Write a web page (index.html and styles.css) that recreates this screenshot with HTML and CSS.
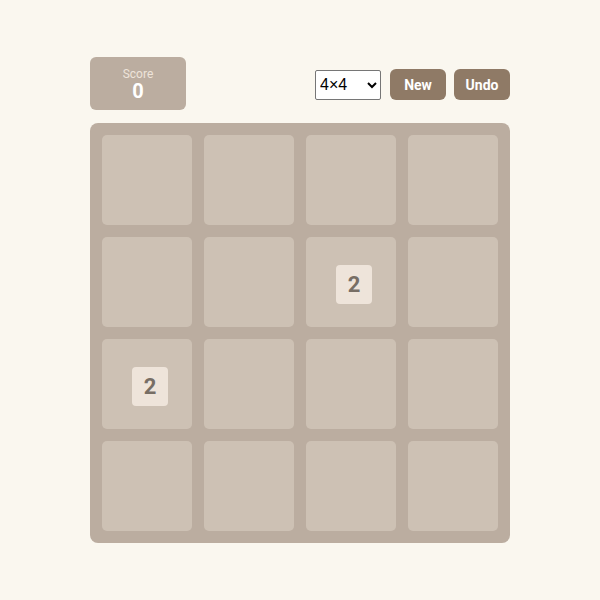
FILE: index.html
```html
<!DOCTYPE html>
<html>
<head>
<meta charset="utf-8">
<link rel="stylesheet" href="styles.css">
</head>
<body>
<div class="game">
  <div class="header">
    <div class="score">
      <div class="score-label">Score</div>
      <div class="score-value">0</div>
    </div>
    <div class="controls">
      <select class="size"><option>4×4</option></select>
      <button class="btn">New</button>
      <button class="btn">Undo</button>
    </div>
  </div>
  <div class="board">
    <div class="cell"></div><div class="cell"></div><div class="cell"></div><div class="cell"></div>
    <div class="cell"></div><div class="cell"></div><div class="cell"><div class="tile">2</div></div><div class="cell"></div>
    <div class="cell"><div class="tile">2</div></div><div class="cell"></div><div class="cell"></div><div class="cell"></div>
    <div class="cell"></div><div class="cell"></div><div class="cell"></div><div class="cell"></div>
  </div>
</div>
</body>
</html>
```
FILE: styles.css
```css
html, body {
  margin: 0;
  padding: 0;
  background: #faf7ef;
  font-family: Roboto, "Liberation Sans", sans-serif;
}
.game {
  width: 420px;
  margin: 57px auto 0;
}
.header {
  display: flex;
  justify-content: space-between;
  align-items: flex-start;
  margin-bottom: 13px;
}
.score {
  width: 96px;
  height: 53px;
  box-sizing: border-box;
  background: #bbada0;
  border-radius: 6px;
  text-align: center;
  padding-top: 10px;
}
.score-label {
  font-size: 12px;
  line-height: 14px;
  color: #eee4da;
}
.score-value {
  font-size: 20px;
  font-weight: 700;
  line-height: 20px;
  color: #ffffff;
}
.controls {
  display: flex;
  align-items: center;
  gap: 8px;
  margin-top: 12px;
}
.size {
  width: 66px;
  height: 30px;
  font-family: "Liberation Sans", Arial, sans-serif;
  font-size: 16px;
  background: #fff;
  border: 1px solid #767676;
  border-radius: 2px;
  color: #000;
  margin-right: 1px;
}
.btn {
  width: 56px;
  height: 31px;
  border: none;
  border-radius: 6px;
  background: #8f7a66;
  color: #fff;
  font-family: Roboto, "Liberation Sans", sans-serif;
  font-weight: 700;
  font-size: 14px;
  padding: 0;
}
.board {
  box-sizing: border-box;
  width: 420px;
  height: 420px;
  padding: 12px;
  background: #bbada0;
  border-radius: 8px;
  display: grid;
  grid-template-columns: repeat(4, 90px);
  grid-template-rows: repeat(4, 90px);
  gap: 12px;
}
.cell {
  position: relative;
  background: #cdc1b4;
  border-radius: 5px;
}
.tile {
  position: absolute;
  left: 30px;
  top: 28px;
  width: 36px;
  height: 39px;
  border-radius: 4px;
  background: #eee4da;
  color: #776e65;
  font-weight: 700;
  font-size: 22px;
  display: flex;
  align-items: center;
  justify-content: center;
}
```
